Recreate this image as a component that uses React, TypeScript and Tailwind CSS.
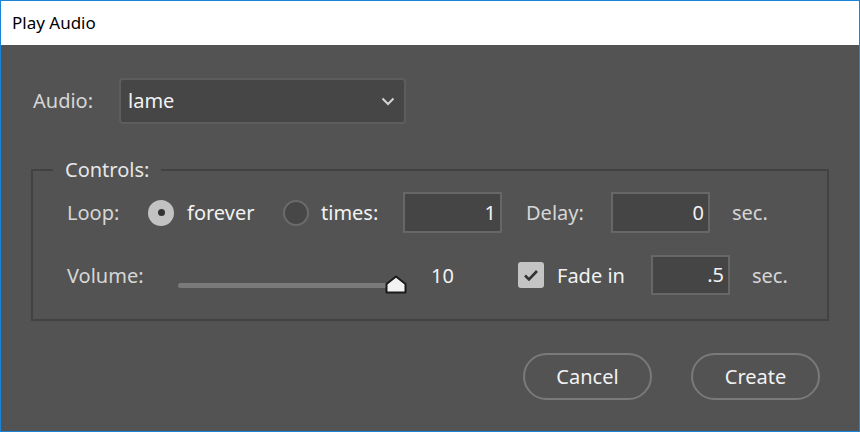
import React from "react"

/**
 * Play Audio dialog - dark Photoshop-style modal
 */

const font = { fontFamily: '"Noto Sans", "Open Sans", sans-serif' }

function Radio({ checked }: { checked?: boolean }) {
  return checked ? (
    <span className="w-[26px] h-[26px] rounded-full bg-[#c2c2c2] flex items-center justify-center flex-shrink-0">
      <span className="w-[7px] h-[7px] rounded-full bg-[#333333]" />
    </span>
  ) : (
    <span className="w-[26px] h-[26px] rounded-full bg-[#474747] border-2 border-[#6b6b6b] flex-shrink-0" />
  )
}

function NumberBox({ value, width, height }: { value: string; width: string; height: string }) {
  return (
    <div
      className={`${width} ${height} bg-[#454545] border-2 border-[#676767] flex items-center justify-end pr-[4px] text-[20px] text-[#f2f2f2] flex-shrink-0`}
    >
      {value}
    </div>
  )
}

export default function App() {
  return (
    <div className="w-[860px] h-[432px] border border-[#1a84d8] flex flex-col overflow-hidden" style={font}>
      {/* Title bar */}
      <div className="h-[44px] bg-white flex items-center pl-[11px] text-[17px] text-black flex-shrink-0">
        Play Audio
      </div>

      {/* Body */}
      <div className="flex-1 bg-[#535353] flex flex-col">
        {/* Audio select */}
        <div className="flex items-center mt-[33px] pl-[32px]">
          <span className="w-[86px] text-[20px] text-[#d6d6d6]">Audio:</span>
          <div className="w-[287px] h-[46px] rounded-[4px] bg-[#464646] border-2 border-[#5d5d5d] flex items-center justify-between pl-[7px] pr-[9px]">
            <span className="text-[20px] text-[#f2f2f2]">lame</span>
            <svg width="14" height="9" viewBox="0 0 14 9" fill="none">
              <path d="M1.5 1.5 L7 7 L12.5 1.5" stroke="#d4d4d4" strokeWidth="2" />
            </svg>
          </div>
        </div>

        {/* Controls group */}
        <fieldset className="ml-[30px] mt-[34px] w-[798px] border-2 border-[#424242] pt-[10px] pb-[24px] px-0">
          <legend className="ml-[20px] px-[12px] text-[20px] leading-[24px] text-[#e6e6e6]">Controls:</legend>

          <div className="pl-[34px]">
            {/* Loop row */}
            <div className="flex items-center h-[41px] text-[20px] text-[#d6d6d6]">
              <span className="w-[81px]">Loop:</span>
              <Radio checked />
              <span className="ml-[13px] w-[96px] text-[#f2f2f2]">forever</span>
              <Radio />
              <span className="ml-[12px] w-[82px] text-[#f2f2f2]">times:</span>
              <NumberBox value="1" width="w-[99px]" height="h-[41px]" />
              <span className="ml-[24px] w-[85px]">Delay:</span>
              <NumberBox value="0" width="w-[99px]" height="h-[41px]" />
              <span className="ml-[22px]">sec.</span>
            </div>

            {/* Volume row */}
            <div className="flex items-center h-[40px] mt-[22px] text-[20px] text-[#d6d6d6]">
              <span className="w-[111px] pt-[2px]">Volume:</span>
              <div className="w-[253px] h-[40px] relative flex-shrink-0">
                <div className="absolute left-0 top-[28px] w-[212px] h-[5px] rounded-full bg-[#7a7a7a]" />
                <svg
                  className="absolute left-[207px] top-[20px]"
                  width="22"
                  height="19"
                  viewBox="0 0 22 19"
                >
                  <path
                    d="M1.5 9 L11 1.5 L20.5 9 L20.5 17.5 L1.5 17.5 Z"
                    fill="#f2f2f2"
                    stroke="#1a1a1a"
                    strokeWidth="2"
                    strokeLinejoin="round"
                  />
                </svg>
              </div>
              <span className="w-[87px] pt-[2px] text-[#f2f2f2]">10</span>
              <span className="w-[26px] h-[26px] rounded-[3px] bg-[#c4c4c4] flex items-center justify-center flex-shrink-0">
                <svg width="16" height="13" viewBox="0 0 16 13" fill="none">
                  <path d="M2 6.5 L6 10.5 L14 2" stroke="#333333" strokeWidth="2.6" />
                </svg>
              </span>
              <span className="ml-[13px] w-[94px] pt-[2px] text-[#f2f2f2]">Fade in</span>
              <NumberBox value=".5" width="w-[79px]" height="h-[40px]" />
              <span className="ml-[22px] pt-[2px]">sec.</span>
            </div>
          </div>
        </fieldset>

        {/* Buttons */}
        <div className="flex justify-end gap-[39px] pr-[39px] mt-[32px]">
          <button className="w-[129px] h-[47px] rounded-full border-2 border-[#7a7a7a] text-[20px] text-[#f2f2f2]">
            Cancel
          </button>
          <button className="w-[129px] h-[47px] rounded-full border-2 border-[#7a7a7a] text-[20px] text-[#f2f2f2]">
            Create
          </button>
        </div>
      </div>
    </div>
  )
}
